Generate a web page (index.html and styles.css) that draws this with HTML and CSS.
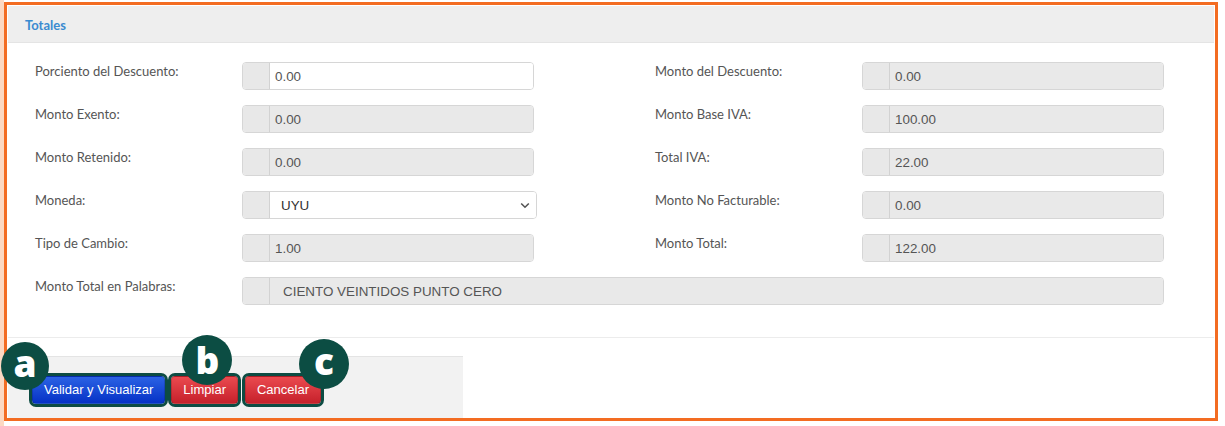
FILE: index.html
```html
<!DOCTYPE html>
<html lang="es">
<head>
<meta charset="utf-8">
<title>Totales</title>
<link rel="stylesheet" href="styles.css">
</head>
<body>
<div class="frame">
  <div class="panel">
    <div class="panel-heading"><span class="panel-title">Totales</span></div>
    <div class="panel-body">
      <div class="form-grid">
        <label class="lbl">Porciento del Descuento:</label>
        <div class="igroup col-l"><span class="addon"></span><span class="field editable">0.00</span></div>
        <span class="spacer"></span>
        <label class="lbl">Monto del Descuento:</label>
        <div class="igroup col-r"><span class="addon"></span><span class="field">0.00</span></div>

        <label class="lbl">Monto Exento:</label>
        <div class="igroup col-l"><span class="addon"></span><span class="field">0.00</span></div>
        <span class="spacer"></span>
        <label class="lbl">Monto Base IVA:</label>
        <div class="igroup col-r"><span class="addon"></span><span class="field">100.00</span></div>

        <label class="lbl">Monto Retenido:</label>
        <div class="igroup col-l"><span class="addon"></span><span class="field">0.00</span></div>
        <span class="spacer"></span>
        <label class="lbl">Total IVA:</label>
        <div class="igroup col-r"><span class="addon"></span><span class="field">22.00</span></div>

        <label class="lbl">Moneda:</label>
        <div class="igroup col-sel"><span class="addon"></span><span class="field editable select">UYU<svg class="chev" width="10" height="7" viewBox="0 0 10 7"><path d="M1.2 1.5 L5 5.2 L8.8 1.5" fill="none" stroke="#555" stroke-width="1.6"/></svg></span></div>
        <span class="spacer"></span>
        <label class="lbl">Monto No Facturable:</label>
        <div class="igroup col-r"><span class="addon"></span><span class="field">0.00</span></div>

        <label class="lbl">Tipo de Cambio:</label>
        <div class="igroup col-l"><span class="addon"></span><span class="field">1.00</span></div>
        <span class="spacer"></span>
        <label class="lbl">Monto Total:</label>
        <div class="igroup col-r"><span class="addon"></span><span class="field">122.00</span></div>

        <label class="lbl">Monto Total en Palabras:</label>
        <div class="igroup wide"><span class="addon"></span><span class="field words">CIENTO VEINTIDOS PUNTO CERO</span></div>
      </div>
    </div>
  </div>
  <div class="footer">
    <span class="btn-wrap"><button class="btn btn-blue">Validar y Visualizar</button><span class="badge badge-a">a</span></span>
    <span class="btn-wrap"><button class="btn btn-red">Limpiar</button><span class="badge badge-b">b</span></span>
    <span class="btn-wrap last"><button class="btn btn-red">Cancelar</button><span class="badge badge-c">c</span></span>
  </div>
</div>
</body>
</html>
```
FILE: styles.css
```css
html, body {
  margin: 0;
  padding: 0;
}
body {
  width: 1225px;
  height: 426px;
  overflow: hidden;
  background: linear-gradient(90deg, #fcd9c3 0, #fcd9c3 4px, #ffffff 4px);
  font-family: "Lato", "Liberation Sans", sans-serif;
}
.frame {
  box-sizing: border-box;
  margin: 2px 0 0 4px;
  width: 1214px;
  height: 419px;
  border: 3px solid #f36c22;
  background: #ffffff;
  padding: 1px 1px 0 1px;
  display: flex;
  flex-direction: column;
}
.panel {
  border-bottom: 1px solid #ececec;
}
.panel-heading {
  height: 37px;
  box-sizing: border-box;
  background: #eeeeee;
  border-bottom: 1px solid #e4e4e4;
  padding: 8px 0 0 17px;
}
.panel-title {
  font-family: "Lato", sans-serif;
  font-weight: 700;
  font-size: 13px;
  line-height: 18px;
  color: #3a8bd0;
}
.panel-body {
  padding: 19px 0 32px 27px;
}
.form-grid {
  display: grid;
  grid-template-columns: 207px 295px 118px 207px 302px;
  grid-auto-rows: 28px;
  row-gap: 15px;
}
.lbl {
  font-family: "Lato", sans-serif;
  font-size: 13px;
  line-height: 18.5px;
  color: #555555;
  align-self: start;
}
.igroup {
  box-sizing: border-box;
  display: flex;
  height: 28px;
  border: 1px solid #d6d6d6;
  border-radius: 4px;
  overflow: hidden;
}
.col-l { width: 292px; }
.col-sel { width: 295px; }
.col-r { width: 302px; }
.wide { grid-column: 2 / 6; }
.addon {
  width: 26px;
  flex: none;
  background: #e8e8e8;
  border-right: 1px solid #d2d2d2;
}
.field {
  flex: 1;
  display: flex;
  align-items: center;
  padding-left: 5px;
  background: #e9e9e9;
  font-family: "Liberation Sans", Arial, sans-serif;
  font-size: 13.4px;
  color: #555555;
}
.field.editable {
  background: #ffffff;
}
.field.select {
  padding-left: 11px;
  padding-right: 6px;
  color: #333333;
  justify-content: space-between;
}
.field.words {
  padding-left: 13px;
}
.spacer { display: block; }
.footer {
  box-sizing: border-box;
  margin-top: 18px;
  width: 455px;
  flex: 1;
  background: #f2f2f2;
  border-top: 1px solid #e4e4e4;
  padding: 19px 0 0 24px;
  display: flex;
  align-items: flex-start;
  gap: 6px;
}
.btn-wrap {
  position: relative;
  display: block;
}
.btn-wrap.last {
  margin-left: 1px;
}
.btn {
  display: block;
  box-sizing: border-box;
  height: 28px;
  padding: 0 11px;
  border: 1px solid rgba(0, 0, 0, 0.15);
  border-radius: 4px;
  font-family: "Liberation Sans", Arial, sans-serif;
  font-size: 13px;
  line-height: 26px;
  white-space: nowrap;
  color: #ffffff;
  outline: 3px solid #0d4c43;
  outline-offset: 0;
  cursor: pointer;
}
.btn-blue {
  background: linear-gradient(#2b62e4, #0632c6);
}
.btn-red {
  background: linear-gradient(#ea4a4f, #c6212b);
}
.badge {
  position: absolute;
  z-index: 2;
  box-sizing: border-box;
  width: 50px;
  height: 50px;
  border-radius: 50%;
  background: #0c4d43;
  color: #ffffff;
  font-family: "Open Sans", sans-serif;
  font-weight: 800;
  font-size: 37px;
  line-height: 1;
  display: flex;
  align-items: center;
  justify-content: center;
}
.badge-a {
  width: 48px;
  height: 48px;
  left: -31px;
  top: -34px;
  padding-bottom: 8px;
}
.badge-b {
  left: 11px;
  top: -41px;
  padding-bottom: 1px;
}
.badge-c {
  left: 54px;
  top: -37px;
  padding-bottom: 8px;
}
```
